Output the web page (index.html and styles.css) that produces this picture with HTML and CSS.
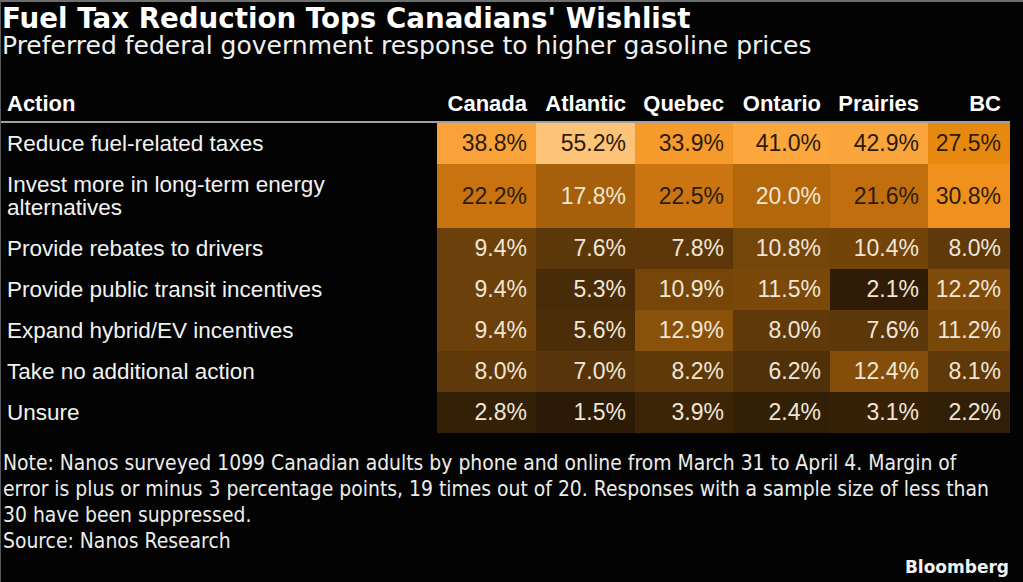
FILE: index.html
```html
<!DOCTYPE html>
<html lang="en">
<head>
<meta charset="utf-8">
<title>Fuel Tax Reduction Tops Canadians' Wishlist</title>
<link rel="stylesheet" href="styles.css">
</head>
<body>
<div class="page">
  <h1 class="title">Fuel Tax Reduction Tops Canadians' Wishlist</h1>
  <p class="subtitle">Preferred federal government response to higher gasoline prices</p>

  <div class="table">
    <div class="row head">
      <div class="label">Action</div>
      <div class="col">Canada</div>
      <div class="col">Atlantic</div>
      <div class="col">Quebec</div>
      <div class="col">Ontario</div>
      <div class="col">Prairies</div>
      <div class="col">BC</div>
    </div>

    <div class="row">
      <div class="label">Reduce fuel-related taxes</div>
      <div class="cell ink" style="background:#faa23a">38.8%</div>
      <div class="cell ink" style="background:#fdc477">55.2%</div>
      <div class="cell ink" style="background:#f59a2b">33.9%</div>
      <div class="cell ink" style="background:#fba73e">41.0%</div>
      <div class="cell ink" style="background:#faa53c">42.9%</div>
      <div class="cell ink" style="background:#e8890f">27.5%</div>
    </div>

    <div class="row">
      <div class="label">Invest more in long-term energy alternatives</div>
      <div class="cell ink" style="background:#c8730f">22.2%</div>
      <div class="cell" style="background:#a65f0b">17.8%</div>
      <div class="cell ink" style="background:#ca7511">22.5%</div>
      <div class="cell" style="background:#b4680c">20.0%</div>
      <div class="cell ink" style="background:#c16f0e">21.6%</div>
      <div class="cell ink" style="background:#f0911d">30.8%</div>
    </div>

    <div class="row">
      <div class="label">Provide rebates to drivers</div>
      <div class="cell" style="background:#6b400a">9.4%</div>
      <div class="cell" style="background:#5c3709">7.6%</div>
      <div class="cell" style="background:#5d3709">7.8%</div>
      <div class="cell" style="background:#754609">10.8%</div>
      <div class="cell" style="background:#724409">10.4%</div>
      <div class="cell" style="background:#5f3909">8.0%</div>
    </div>

    <div class="row">
      <div class="label">Provide public transit incentives</div>
      <div class="cell" style="background:#6b400a">9.4%</div>
      <div class="cell" style="background:#482b08">5.3%</div>
      <div class="cell" style="background:#764609">10.9%</div>
      <div class="cell" style="background:#7a4809">11.5%</div>
      <div class="cell" style="background:#2f1c06">2.1%</div>
      <div class="cell" style="background:#7f4b0a">12.2%</div>
    </div>

    <div class="row">
      <div class="label">Expand hybrid/EV incentives</div>
      <div class="cell" style="background:#6b400a">9.4%</div>
      <div class="cell" style="background:#4b2d08">5.6%</div>
      <div class="cell" style="background:#8a510a">12.9%</div>
      <div class="cell" style="background:#5f3909">8.0%</div>
      <div class="cell" style="background:#5c3709">7.6%</div>
      <div class="cell" style="background:#78470a">11.2%</div>
    </div>

    <div class="row">
      <div class="label">Take no additional action</div>
      <div class="cell" style="background:#5f3909">8.0%</div>
      <div class="cell" style="background:#573409">7.0%</div>
      <div class="cell" style="background:#603909">8.2%</div>
      <div class="cell" style="background:#503008">6.2%</div>
      <div class="cell" style="background:#844e0a">12.4%</div>
      <div class="cell" style="background:#5f3909">8.1%</div>
    </div>

    <div class="row">
      <div class="label">Unsure</div>
      <div class="cell" style="background:#342007">2.8%</div>
      <div class="cell" style="background:#2b1a06">1.5%</div>
      <div class="cell" style="background:#3c2407">3.9%</div>
      <div class="cell" style="background:#312006">2.4%</div>
      <div class="cell" style="background:#362107">3.1%</div>
      <div class="cell" style="background:#301f06">2.2%</div>
    </div>
  </div>

  <div class="note">
    <p>Note: Nanos surveyed 1099 Canadian adults by phone and online from March 31 to April 4. Margin of<br>error is plus or minus 3 percentage points, 19 times out of 20. Responses with a sample size of less than<br>30 have been suppressed.</p>
    <p>Source: Nanos Research</p>
  </div>
  <div class="brand">Bloomberg</div>
</div>
</body>
</html>
```

FILE: styles.css
```css
html, body {
  margin: 0;
  padding: 0;
  background: #030303;
}

body {
  width: 1023px;
  height: 582px;
  overflow: hidden;
  box-sizing: border-box;
  border-top: 2px solid #6e6e6e;
  border-left: 1px solid #5a5a5a;
}

.page {
  padding-top: 3px;
  color: #f2f2f2;
}

.title {
  margin: 0;
  padding-left: 1px;
  font-family: "DejaVu Sans", sans-serif;
  font-weight: bold;
  font-size: 27.7px;
  line-height: 28px;
  color: #ffffff;
  white-space: nowrap;
}

.subtitle {
  margin: 0;
  padding-left: 1px;
  font-family: "DejaVu Sans", sans-serif;
  font-size: 25px;
  line-height: 26px;
  color: #f0f0f0;
  white-space: nowrap;
}

.table {
  width: 1009px;
  font-family: "Liberation Sans", Arial, sans-serif;
}

.row {
  display: grid;
  grid-template-columns: 436px 99px 99px 98px 97px 98px 82px;
  align-items: stretch;
}

.head {
  padding-top: 33px;
  padding-bottom: 5px;
  border-bottom: 2px solid #a0a0a0;
  font-weight: bold;
  font-size: 22px;
  line-height: 24px;
  color: #ffffff;
}

.head .col {
  text-align: right;
  padding-right: 9px;
}

.label {
  padding: 9px 20px 9px 6px;
  font-size: 22.5px;
  line-height: 23px;
  color: #f2f2f2;
}

.head .label {
  padding: 0 0 0 6px;
  font-size: 22px;
  line-height: 24px;
  color: #ffffff;
}

.cell {
  display: flex;
  align-items: center;
  justify-content: flex-end;
  padding-right: 9px;
  font-size: 23px;
  line-height: 23px;
  color: #efe6d8;
}

.cell.ink {
  color: #2b1b08;
}

.note {
  margin-top: 17px;
  padding-left: 2px;
  font-family: "DejaVu Sans Condensed", "DejaVu Sans", sans-serif;
  font-stretch: condensed;
  font-size: 20.9px;
  line-height: 26px;
  color: #ececec;
  white-space: nowrap;
}

.note p {
  margin: 0;
}

.brand {
  text-align: right;
  padding-right: 14px;
  font-family: "DejaVu Sans", sans-serif;
  font-weight: bold;
  font-size: 17px;
  line-height: 26px;
  color: #f2f2f2;
}
```
